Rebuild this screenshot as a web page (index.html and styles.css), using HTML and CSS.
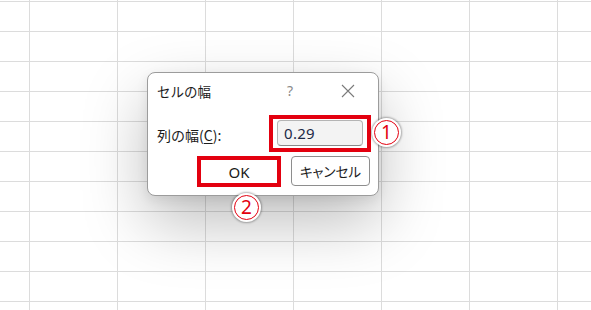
FILE: index.html
```html
<!DOCTYPE html>
<html lang="ja">
<head>
<meta charset="utf-8">
<link rel="stylesheet" href="styles.css">
</head>
<body>
<div class="sheet">
  <div class="dialog">
    <div class="titlebar">
      <span class="title">セルの幅</span>
      <span class="help">?</span>
      <span class="close">
        <svg width="14" height="14" viewBox="0 0 14 14"><path d="M1 1 L13 13 M13 1 L1 13" stroke="#7a7a7a" stroke-width="1.1" fill="none"/></svg>
      </span>
    </div>
    <div class="field-row">
      <span class="label">列の幅(<u>C</u>):</span>
      <span class="mark mark-input"><span class="input">0.29</span></span>
    </div>
    <div class="button-row">
      <span class="mark mark-ok"><span class="btn btn-ok">OK</span></span>
      <span class="btn btn-cancel">キャンセル</span>
    </div>
  </div>
  <span class="badge badge-1"><span class="ring">1</span></span>
  <span class="badge badge-2"><span class="ring">2</span></span>
</div>
</body>
</html>
```
FILE: styles.css
```css
html, body {
  margin: 0;
  padding: 0;
}
body {
  width: 591px;
  height: 310px;
  overflow: hidden;
  background: #ffffff;
  font-family: "Noto Sans CJK JP", "Noto Sans", sans-serif;
  color: #1b1b1b;
}
.sheet {
  position: relative;
  width: 591px;
  height: 310px;
  background-image:
    linear-gradient(to right, #dcdcdc 1px, transparent 1px),
    linear-gradient(to bottom, #dcdcdc 1px, transparent 1px);
  background-size: 88px 30px, 88px 30px;
  background-position: 29px 1px, 29px 1px;
}
.dialog {
  position: absolute;
  left: 147px;
  top: 72px;
  width: 232px;
  height: 124px;
  box-sizing: border-box;
  background: #ffffff;
  border: 1px solid #9c9c9c;
  border-radius: 8px;
  box-shadow: 0 26px 64px rgba(0, 0, 0, 0.26), 0 4px 12px rgba(0, 0, 0, 0.08);
  padding: 0 7px 0 9px;
  display: flex;
  flex-direction: column;
}
.titlebar {
  height: 35px;
  display: flex;
  align-items: center;
  font-size: 13.5px;
}
.title {
  flex: 1;
  margin-top: 1px;
}
.help {
  width: 14px;
  text-align: center;
  color: #8a8a8a;
  font-family: "Noto Sans", sans-serif;
  font-size: 14px;
  margin-right: 44px;
}
.close {
  display: flex;
  margin-right: 16px;
}
.field-row {
  margin-top: 7px;
  display: flex;
  align-items: center;
  justify-content: space-between;
  font-size: 14px;
}
.label {
  margin-top: 3px;
}
.label u {
  text-underline-offset: 2px;
}
.mark {
  border: 4px solid #e3000f;
  box-sizing: border-box;
  display: flex;
}
.mark-input {
  width: 102px;
  height: 37px;
  padding: 1px 4px 2px 4px;
}
.input {
  flex: 1;
  box-sizing: border-box;
  border: 1px solid #b4b4b4;
  border-bottom-color: #8a8a8a;
  border-radius: 4px;
  background: #f3f3f3;
  font-family: "Noto Sans", sans-serif;
  font-size: 15px;
  letter-spacing: 0.3px;
  color: #1c2a48;
  padding-left: 6px;
  display: flex;
  align-items: center;
}
.button-row {
  margin-top: 4px;
  display: flex;
  justify-content: flex-end;
  gap: 10px;
}
.mark-ok {
  width: 84px;
  height: 31px;
}
.btn {
  box-sizing: border-box;
  display: flex;
  align-items: center;
  justify-content: center;
  background: #ffffff;
  font-size: 13.5px;
}
.btn-ok {
  flex: 1;
  font-family: "Noto Sans", sans-serif;
  font-size: 15px;
}
.btn-cancel {
  width: 79px;
  height: 30px;
  margin-right: 1px;
  border: 1px solid #8e8e8e;
  border-radius: 4px;
  font-feature-settings: "palt";
}
.badge {
  position: absolute;
  width: 29px;
  height: 29px;
  box-sizing: border-box;
  border-radius: 50%;
  background: #ffffff;
  box-shadow: 0 0 2px 1px rgba(0, 0, 0, 0.3);
  display: flex;
  align-items: center;
  justify-content: center;
}
.badge-1 {
  left: 372px;
  top: 118px;
}
.badge-2 {
  left: 232px;
  top: 193px;
}
.ring {
  width: 25px;
  height: 25px;
  box-sizing: border-box;
  border: 1.8px solid #e3000f;
  border-radius: 50%;
  color: #e3000f;
  font-family: "Noto Sans", sans-serif;
  font-size: 19px;
  line-height: 1;
  display: flex;
  align-items: center;
  justify-content: center;
}
```
